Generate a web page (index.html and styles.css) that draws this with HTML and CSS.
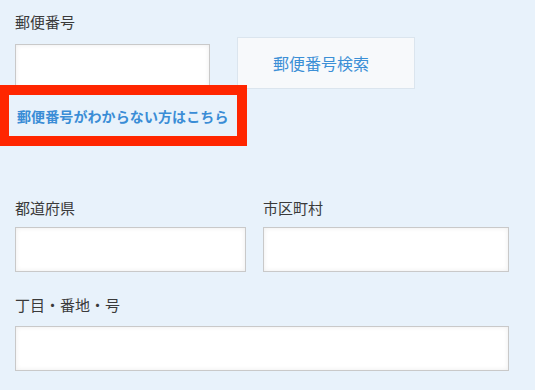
FILE: index.html
```html
<!DOCTYPE html>
<html lang="ja">

<head>
    <meta charset="UTF-8">
    <meta name="viewport" content="width=device-width, initial-scale=1.0">
    <title>住所入力</title>
    <link rel="stylesheet" href="styles.css">
</head>

<body>
    <div class="form">
        <div class="postal">
            <label class="label label-postal">郵便番号</label>
            <div class="postal-row">
                <input type="text" class="text postal-text">
                <button class="search">郵便番号検索</button>
            </div>
            <div class="help">
                <a class="help-link">郵便番号がわからない方はこちら</a>
            </div>
        </div>
        <div class="pair">
            <div class="field">
                <label class="label">都道府県</label>
                <input type="text" class="text">
            </div>
            <div class="field">
                <label class="label">市区町村</label>
                <input type="text" class="text">
            </div>
        </div>
        <div class="field street">
            <label class="label">丁目・番地・号</label>
            <input type="text" class="text street-text">
        </div>
    </div>
</body>

</html>
```

FILE: styles.css
```css
body {
    margin: 0px;
    padding: 0px;
    background-color: #e8f2fb;
    font-family: "Noto Sans CJK JP", "Noto Sans", sans-serif;
    color: #3a3a3a;
}

.form {
    padding: 11px 0px 0px 15px;
    width: 494px;
}

.label {
    display: block;
    font-size: 15px;
    line-height: 22px;
    margin-bottom: 8px;
}

.label-postal {
    margin-bottom: 4px;
}

.postal-row {
    display: flex;
    gap: 27px;
    align-items: flex-start;
}

.text {
    display: block;
    box-sizing: border-box;
    width: 100%;
    height: 45px;
    margin: 0px;
    border: 1px solid #c9c9c9;
    border-radius: 0px;
    background-color: #ffffff;
    box-shadow: inset 0px 0px 5px rgba(0, 0, 0, 0.08);
    font-size: 15px;
}

.postal-text {
    width: 195px;
    margin-top: 7px;
}

.search {
    box-sizing: border-box;
    width: 178px;
    height: 52px;
    border: 1px solid #dbe5ee;
    background-color: #f7f9fb;
    color: #3b8fd6;
    font-family: "Noto Sans CJK JP", sans-serif;
    font-size: 16px;
    padding: 0px 10px 0px 0px;
}

.help {
    position: relative;
    box-sizing: border-box;
    width: 247px;
    margin: -4px 0px 0px -15px;
    border: 10px solid #ff2600;
    border-left-width: 9px;
    background-color: #e8f2fb;
    padding-left: 8px;
    line-height: 40px;
}

.help-link {
    color: #3a8dd6;
    font-size: 14px;
    font-weight: bold;
    letter-spacing: 0.1px;
}

.pair {
    display: grid;
    grid-template-columns: 231px 246px;
    gap: 17px;
    margin-top: 51px;
}

.street {
    margin-top: 22px;
}

.street .label {
    margin-bottom: 10px;
}
```
